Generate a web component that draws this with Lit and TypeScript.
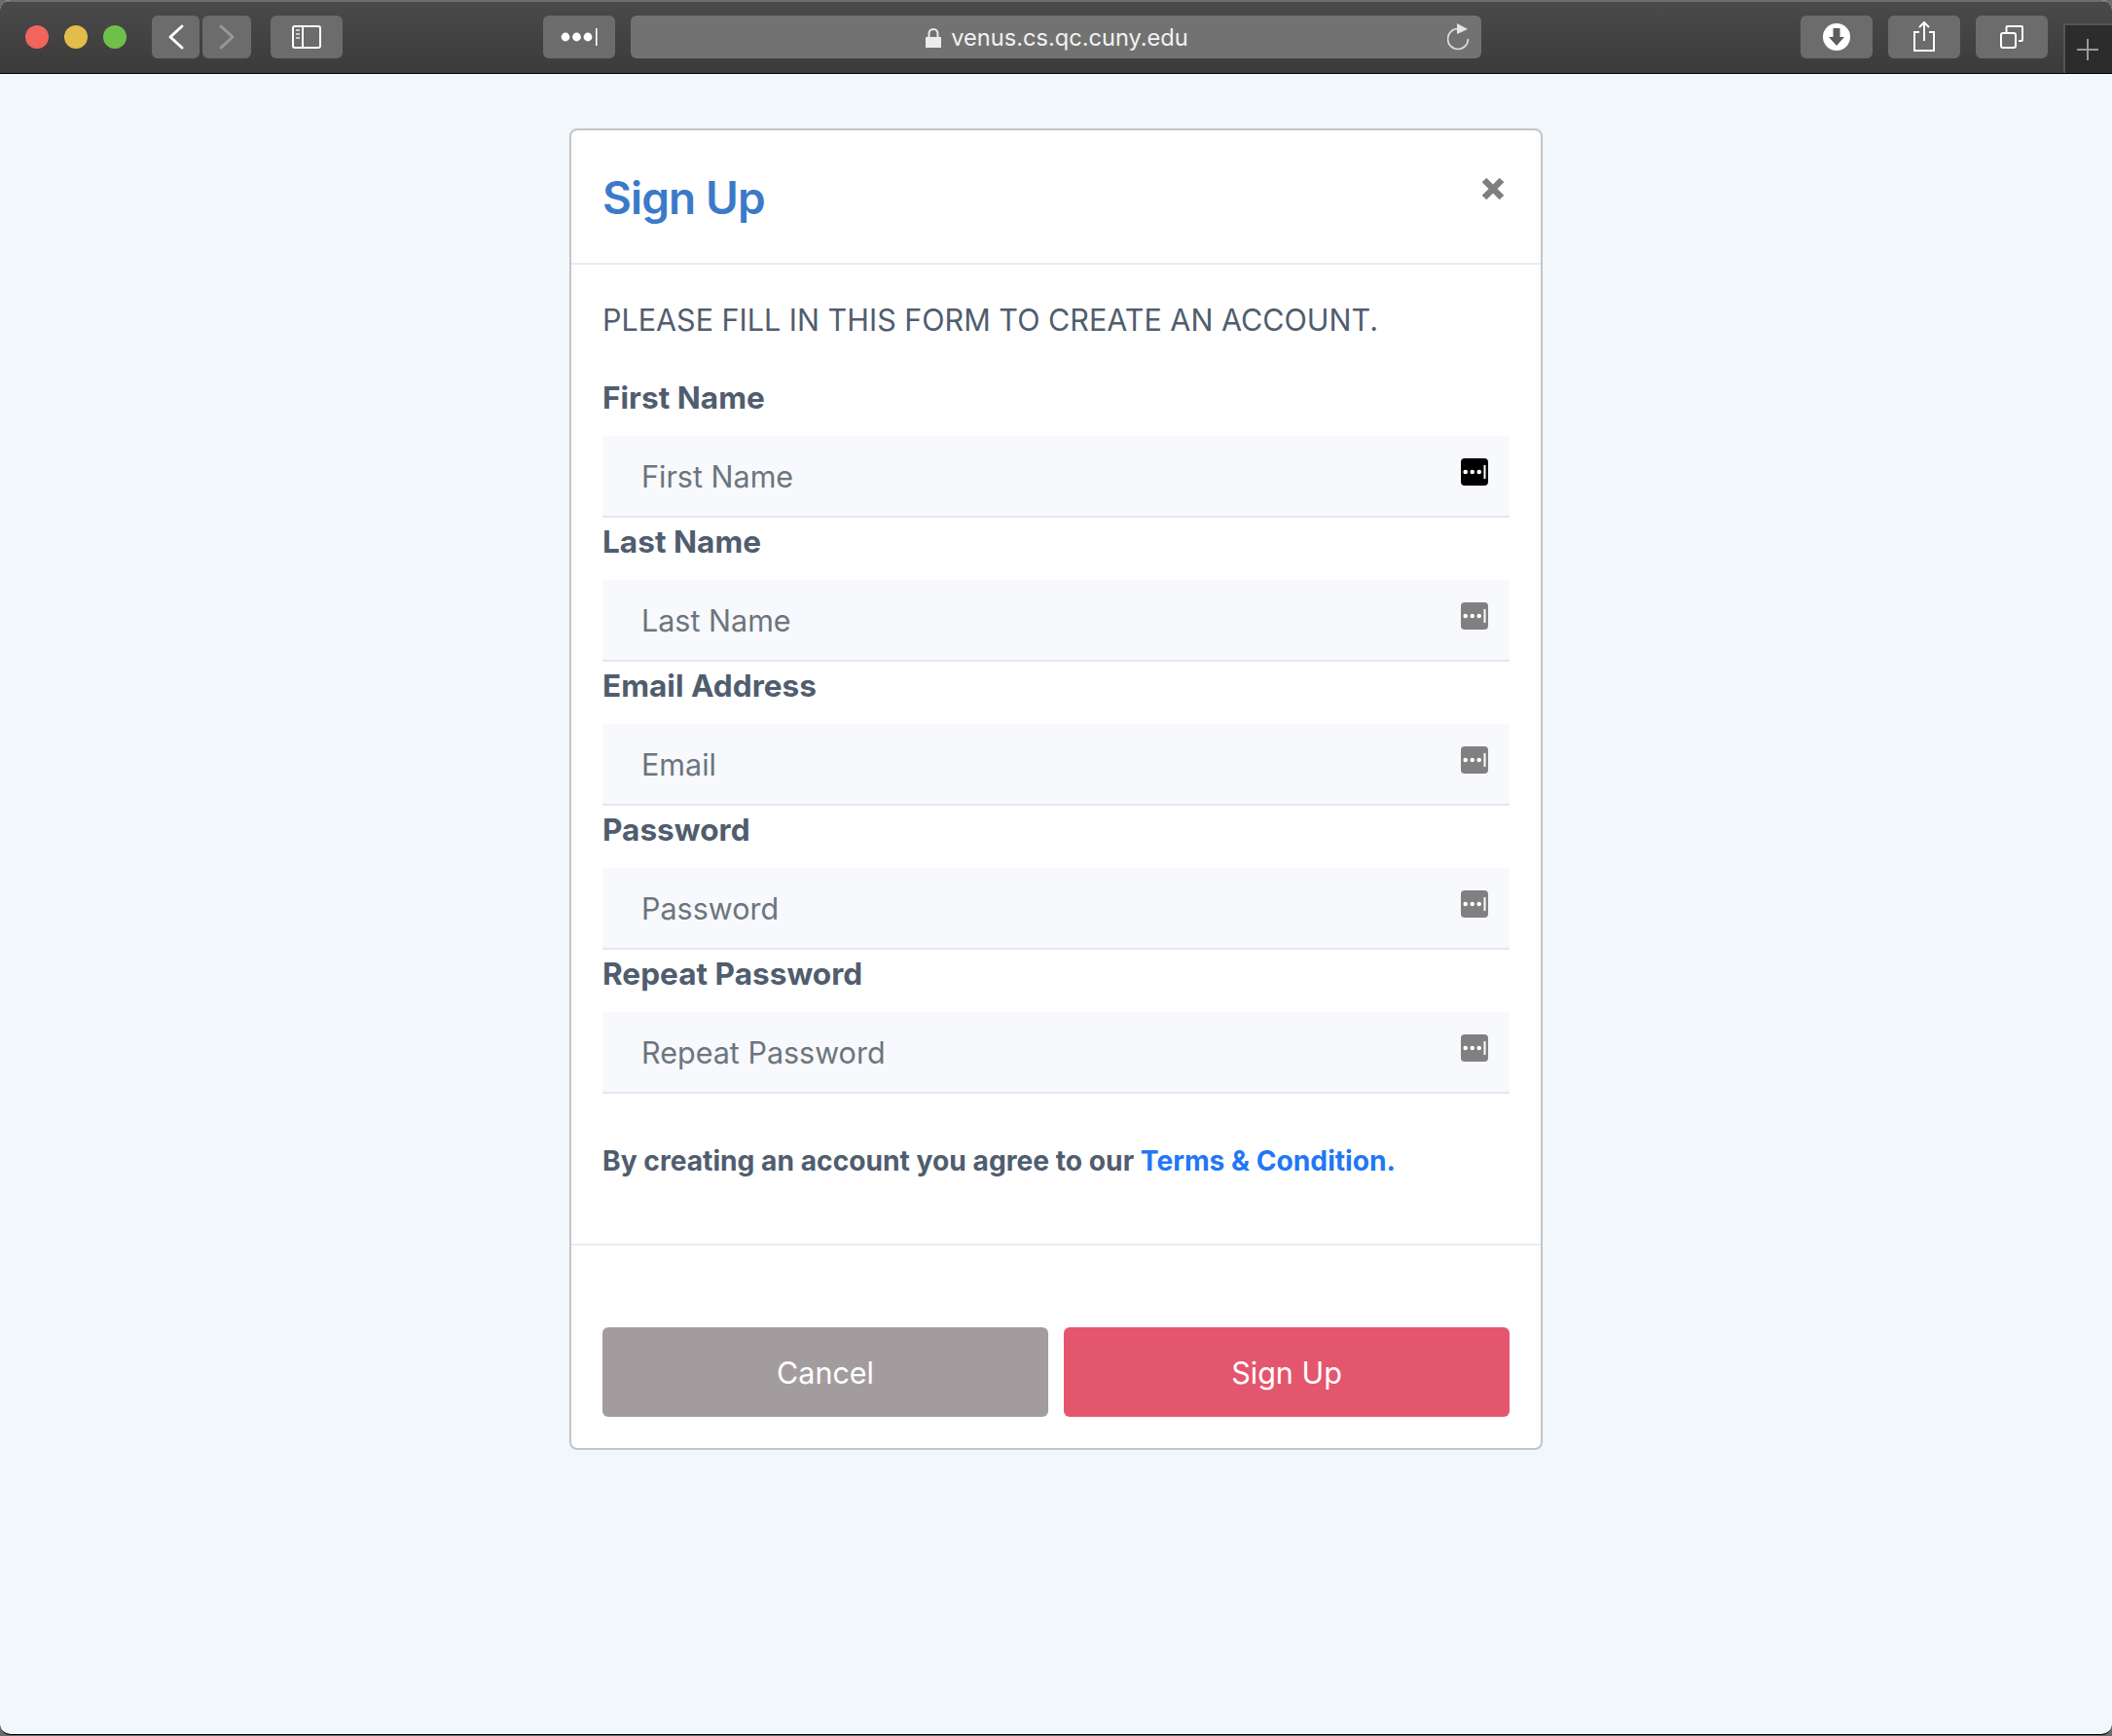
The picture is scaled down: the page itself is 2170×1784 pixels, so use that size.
import { LitElement, html, css } from "lit"
import { customElement } from "lit/decorators.js"

const fields = [
    { label: "First Name", placeholder: "First Name", active: true },
    { label: "Last Name", placeholder: "Last Name", active: false },
    { label: "Email Address", placeholder: "Email", active: false },
    { label: "Password", placeholder: "Password", active: false },
    { label: "Repeat Password", placeholder: "Repeat Password", active: false },
]

const keyIcon = (active: boolean) => html`
    <svg class="key" width="28" height="28" viewBox="0 0 28 28">
        <rect width="28" height="28" rx="4" fill=${active ? "#000" : "#808080"}></rect>
        <circle cx="4.7" cy="14" r="2.3" fill="#fff"></circle>
        <circle cx="11.7" cy="14" r="2.3" fill="#fff"></circle>
        <circle cx="18.7" cy="14" r="2.3" fill="#fff"></circle>
        <rect x="23.5" y="7" width="2" height="14" fill="#fff"></rect>
    </svg>`

@customElement("app-root")
export class AppRoot extends LitElement {
    static styles = css`
        :host {
            display: block;
            height: 1784px;
            background: #6a6a6a;
            font-family: Inter, "Liberation Sans", sans-serif;
        }
        .window {
            height: 1783px;
            box-sizing: border-box;
            display: flex;
            flex-direction: column;
            background: #f2f7fb;
            border-bottom: 1px solid #000;
            border-radius: 11px;
            overflow: hidden;
        }
        .toolbar {
            height: 76px;
            flex: none;
            display: flex;
            align-items: flex-start;
            padding-top: 14px;
            box-sizing: border-box;
            background: linear-gradient(#4a4a4a, #3b3b3b);
            border-top: 2px solid #6e6e6e;
            border-bottom: 1px solid #000;
        }
        .lights {
            display: flex;
            gap: 16px;
            height: 44px;
            align-items: center;
            margin-left: 26px;
            margin-right: 26px;
        }
        .light {
            width: 24px;
            height: 24px;
            border-radius: 50%;
        }
        .btn {
            height: 44px;
            flex: none;
            border-radius: 6px;
            background: #6c6c6c;
            display: flex;
            align-items: center;
            justify-content: center;
        }
        .back { width: 49px; }
        .forward { width: 50px; margin-left: 3px; }
        .sidebar { width: 74px; margin-left: 20px; }
        .dots { width: 74px; margin-left: 206px; }
        .url {
            width: 874px;
            box-sizing: border-box;
            margin-left: 16px;
            padding: 1px 0 0 2px;
            position: relative;
            gap: 10px;
            background: #727272;
            color: #f2f2f2;
            font-size: 23.6px;
        }
        .reload { position: absolute; right: 11px; top: 8px; }
        .download { width: 74px; margin-left: 328px; }
        .share { width: 74px; margin-left: 16px; }
        .tabs { width: 74px; margin-left: 16px; }
        .plus {
            width: 50px;
            height: 51px;
            margin-left: 16px;
            margin-top: 8px;
            flex: none;
            background: #2c2c2c;
            border-left: 2px solid #555;
            border-top: 2px solid #555;
            box-sizing: border-box;
            padding-right: 2px;
            display: flex;
            align-items: center;
            justify-content: center;
        }
        .page {
            flex: 1;
            padding-top: 56px;
        }
        .modal {
            width: 1000px;
            height: 1358px;
            margin: 0 auto;
            box-sizing: border-box;
            background: #fff;
            border: 2px solid #bfc5ca;
            border-radius: 8px;
            display: flex;
            flex-direction: column;
            color: #505d6e;
        }
        .head {
            height: 138px;
            flex: none;
            box-sizing: border-box;
            border-bottom: 2px solid #e9edf1;
            display: flex;
            justify-content: space-between;
            align-items: flex-start;
            padding: 0 37px 0 32px;
        }
        h1 {
            margin: 39px 0 0;
            font-size: 46px;
            line-height: 60px;
            font-weight: 600;
            letter-spacing: -0.9px;
            color: #3b7ac9;
        }
        .close { margin-top: 48px; }
        .body {
            flex: 1;
            padding: 35px 32px 0;
        }
        .intro {
            margin: 0 0 36px;
            font-size: 30.5px;
            line-height: 44px;
            text-transform: uppercase;
        }
        label {
            display: block;
            font-size: 31.6px;
            line-height: 44px;
            font-weight: 700;
            margin-bottom: 17px;
        }
        .field {
            height: 84px;
            box-sizing: border-box;
            background: #f7f9fc;
            border-bottom: 2px solid #e2e8f0;
            display: flex;
            align-items: center;
            padding-right: 22px;
            margin-bottom: 3px;
        }
        input {
            flex: 1;
            min-width: 0;
            height: 100%;
            box-sizing: border-box;
            border: 0;
            outline: 0;
            background: none;
            padding: 0 0 0 40px;
            font: 400 30.5px Inter, "Liberation Sans", sans-serif;
            color: #505d6e;
        }
        input::placeholder { color: #6c757d; opacity: 1; }
        .key { flex: none; margin-top: -8px; }
        .agree {
            margin: 47px 0 0;
            font-size: 28.2px;
            line-height: 44px;
            font-weight: 700;
        }
        .agree a { color: #2277f5; text-decoration: none; }
        .foot {
            height: 210px;
            flex: none;
            box-sizing: border-box;
            border-top: 2px solid #e9edf1;
            padding: 84px 32px 0;
            display: flex;
            gap: 16px;
        }
        .foot button {
            flex: 1;
            height: 92px;
            border: 0;
            border-radius: 6px;
            color: #fff;
            font: 400 30.5px Inter, "Liberation Sans", sans-serif;
        }
        .cancel { background: #a39c9e; }
        .signup { background: #e4566e; }
    `

    render() {return html`
        <div class="window">
            <div class="toolbar">
                <div class="lights">
                    <div class="light" style="background:#f1655c"></div>
                    <div class="light" style="background:#e3bd4b"></div>
                    <div class="light" style="background:#70bf48"></div>
                </div>
                <div class="btn back">
                    <svg width="20" height="32" viewBox="0 0 20 32"><path d="M16 5 4 16l12 11" fill="none" stroke="#fff" stroke-width="3" stroke-linecap="round" stroke-linejoin="round"/></svg>
                </div>
                <div class="btn forward">
                    <svg width="20" height="32" viewBox="0 0 20 32"><path d="M4 5l12 11L4 27" fill="none" stroke="#989898" stroke-width="3" stroke-linecap="round" stroke-linejoin="round"/></svg>
                </div>
                <div class="btn sidebar">
                    <svg width="30" height="24" viewBox="0 0 30 24"><rect x="1" y="1" width="28" height="22" rx="2" fill="none" stroke="#fff" stroke-width="2"/><path d="M11 1v22" stroke="#fff" stroke-width="2"/><path d="M4 5h4M4 9h4M4 13h4" stroke="#c8c8c8" stroke-width="2"/></svg>
                </div>
                <div class="btn dots">
                    <svg width="38" height="20" viewBox="0 0 38 20"><circle cx="5" cy="10" r="4.4" fill="#fff"/><circle cx="16.5" cy="10" r="4.4" fill="#fff"/><circle cx="28" cy="10" r="4.4" fill="#fff"/><rect x="36" y="1" width="1.6" height="18" fill="#fff"/></svg>
                </div>
                <div class="btn url">
                    <svg width="16" height="20" viewBox="0 0 16 20"><rect x="0" y="9" width="16" height="11" fill="#ececec"/><path d="M3.5 9V5.5a4.5 4.5 0 0 1 9 0V9" fill="none" stroke="#ececec" stroke-width="2"/></svg>
                    <span>venus.cs.qc.cuny.edu</span>
                    <svg class="reload" width="24" height="28" viewBox="0 0 24 28"><path d="M11 5.5A10.5 10.5 0 1 0 21.5 16" fill="none" stroke="#dcdcdc" stroke-width="1.7"/><path d="M10 0l11 6-11 5z" fill="#e4e4e4"/></svg>
                </div>
                <div class="btn download">
                    <svg width="28" height="28" viewBox="0 0 28 28"><circle cx="14" cy="14" r="14" fill="#fff"/><path d="M10.5 5h7v9H22l-8 9-8-9h4.500z" fill="#5c5c5c"/></svg>
                </div>
                <div class="btn share">
                    <svg width="24" height="32" viewBox="0 0 24 32"><path d="M7 11H2v19h20V11h-5" fill="none" stroke="#fff" stroke-width="2"/><path d="M12 20V1M7 6l5-5 5 5" fill="none" stroke="#fff" stroke-width="2"/></svg>
                </div>
                <div class="btn tabs">
                    <svg width="24" height="24" viewBox="0 0 24 24"><rect x="1" y="8" width="15" height="15" rx="2" fill="none" stroke="#fff" stroke-width="2"/><path d="M6.500 7V2a1 1 0 0 1 1-1H22a1 1 0 0 1 1 1v13a1 1 0 0 1-1 1h-3" fill="none" stroke="#fff" stroke-width="2"/></svg>
                </div>
                <div class="plus">
                    <svg width="22" height="22" viewBox="0 0 22 22"><path d="M11 0v22M0 11h22" stroke="#9a9a9a" stroke-width="2"/></svg>
                </div>
            </div>
            <div class="page">
                <div class="modal">
                    <div class="head">
                        <h1>Sign Up</h1>
                        <svg class="close" width="24" height="24" viewBox="0 0 24 24"><path d="M3 3l18 18M21 3 3 21" stroke="#7f7f7f" stroke-width="6.500"/></svg>
                    </div>
                    <div class="body">
                        <p class="intro">Please fill in this form to create an account.</p>
                        ${fields.map(f => html`
                            <label>${f.label}</label>
                            <div class="field">
                                <input type="text" placeholder=${f.placeholder}>
                                ${keyIcon(f.active)}
                            </div>
                        `)}
                        <p class="agree">By creating an account you agree to our <a href="#">Terms &amp; Condition.</a></p>
                    </div>
                    <div class="foot">
                        <button class="cancel">Cancel</button>
                        <button class="signup">Sign Up</button>
                    </div>
                </div>
            </div>
        </div>
    `}
}
